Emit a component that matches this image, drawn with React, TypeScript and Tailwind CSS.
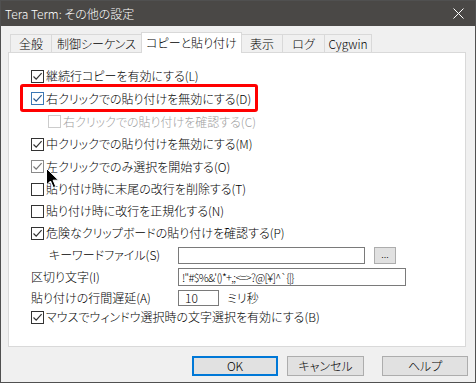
import React from 'react';

type BoxState = 'normal' | 'focus' | 'hover' | 'disabled';

function CheckBox({ checked, state = 'normal' }: { checked: boolean; state?: BoxState }) {
  const border =
    state === 'focus' ? 'border-[#3b78b5]' :
    state === 'hover' ? 'border-[#8a8a8a]' :
    state === 'disabled' ? 'border-[#cccccc]' : 'border-[#333333]';
  const stroke =
    state === 'focus' ? '#2b5b8f' :
    state === 'hover' ? '#777777' :
    state === 'disabled' ? '#bbbbbb' : '#333333';
  return (
    <span className={`w-[13px] h-[13px] border ${border} bg-white flex items-center justify-center shrink-0`}>
      {checked && (
        <svg width="11" height="11" viewBox="0 0 11 11">
          <path d="M1.5 5.5 L4.2 8.2 L9.6 2.2" fill="none" stroke={stroke} strokeWidth="1.2" />
        </svg>
      )}
    </span>
  );
}

function CheckRow({ label, checked, state, h, indent = false }: { label: string; checked: boolean; state?: BoxState; h: string; indent?: boolean }) {
  return (
    <div className={`flex items-center ${h} ${indent ? 'pl-[17px]' : ''}`}>
      <CheckBox checked={checked} state={state} />
      <span className={`ml-[2px] ${state === 'disabled' ? 'text-[#a0a0a0]' : 'text-black'}`}>{label}</span>
    </div>
  );
}

const tabs = [
  { label: '全般', w: 'w-[42px]' },
  { label: '制御シーケンス', w: 'w-[91px]' },
  { label: 'コピーと貼り付け', w: 'w-[101px]', active: true },
  { label: '表示', w: 'w-[42px]' },
  { label: 'ログ', w: 'w-[43px]' },
  { label: 'Cygwin', w: 'w-[48px]' },
];

export default function App() {
  return (
    <div
      className="relative w-[476px] h-[383px] bg-[#f0f0f0] border border-[#505050] flex flex-col text-[12px] font-light leading-none text-black [font-feature-settings:'palt'] overflow-hidden"
      style={{ fontFamily: '"Noto Sans CJK JP", "Noto Sans", sans-serif' }}
    >
      {/* title bar */}
      <div className="h-[25px] bg-[#4a4846] flex items-center justify-between shrink-0">
        <span className="pl-[4px] text-white text-[12px]">Tera Term: その他の設定</span>
        <svg width="11" height="11" viewBox="0 0 11 11" className="mr-[11px]">
          <path d="M0.5 0.5 L10.5 10.5 M10.5 0.5 L0.5 10.5" stroke="#ffffff" strokeWidth="1" />
        </svg>
      </div>

      <div className="pl-[7px] pr-[9px] pt-[6px]">
        {/* tabs */}
        <div className="flex items-end h-[20px] pl-[2px]">
          {tabs.map((t, i) =>
            t.active ? (
              <div
                key={t.label}
                className={`${t.w} h-[21px] -mb-px -ml-px relative z-10 bg-white border border-b-0 border-[#d9d9d9] flex items-center justify-center`}
              >
                {t.label}
              </div>
            ) : (
              <div
                key={t.label}
                className={`${t.w} h-[18px] ${i > 0 ? '-ml-px' : ''} bg-[#f0f0f0] border border-b-0 border-[#d9d9d9] flex items-center justify-center`}
              >
                {t.label}
              </div>
            )
          )}
        </div>

        {/* panel */}
        <div className="relative h-[295px] bg-white border border-[#d9d9d9] pl-[22px] pt-[12px]">
          <CheckRow h="h-[22px]" checked label="継続行コピーを有効にする(L)" />
          <CheckRow h="h-[23px]" checked state="focus" label="右クリックでの貼り付けを無効にする(D)" />
          <CheckRow h="h-[23px]" checked={false} state="disabled" indent label="右クリックでの貼り付けを確認する(C)" />
          <CheckRow h="h-[22px]" checked label="中クリックでの貼り付けを無効にする(M)" />
          <CheckRow h="h-[23px]" checked state="hover" label="左クリックでのみ選択を開始する(O)" />
          <CheckRow h="h-[22px]" checked={false} label="貼り付け時に末尾の改行を削除する(T)" />
          <CheckRow h="h-[22px]" checked={false} label="貼り付け時に改行を正規化する(N)" />
          <CheckRow h="h-[22px]" checked label="危険なクリップボードの貼り付けを確認する(P)" />

          <div className="flex items-center h-[22px]">
            <span className="w-[147px] pl-[18px]">キーワードファイル(S)</span>
            <div className="w-[187px] h-[17px] border border-[#7a7a7a] bg-white" />
            <div className="ml-[9px] w-[22px] h-[17px] border border-[#adadad] bg-[#e1e1e1] flex items-center justify-center text-[10px] pb-[3px]">
              ...
            </div>
          </div>

          <div className="flex items-center h-[22px]">
            <span className="w-[147px]">区切り文字(I)</span>
            <div className="w-[228px] h-[18px] border border-[#7a7a7a] bg-white flex items-center pl-[3px] text-[11px] tracking-[-0.7px] whitespace-nowrap overflow-hidden">
              {'!"#$%&\'()*+,;<=>?@[¥]^`{|}'}
            </div>
          </div>

          <div className="flex items-center h-[20px]">
            <span className="w-[147px]">貼り付けの行間遅延(A)</span>
            <div className="w-[41px] h-[16px] border border-[#7a7a7a] bg-white flex items-center pl-[6px]">10</div>
            <span className="ml-[8px]">ミリ秒</span>
          </div>

          <CheckRow h="h-[18px]" checked label="マウスでウィンドウ選択時の文字選択を有効にする(B)" />

          {/* highlight annotation */}
          <div className="absolute left-[11px] top-[31px] w-[238px] h-[28px] border-[3px] border-[#ff0000] rounded-[3px] pointer-events-none" />

          {/* mouse cursor */}
          <svg className="absolute left-[37px] top-[115px]" width="14" height="21" viewBox="0 0 14 21">
            <path d="M0.5 0.5 L0.5 17 L4.5 13 L7.3 19.6 L9.8 18.6 L7.1 12.2 L12.5 12.2 Z" fill="#000000" stroke="#ffffff" strokeWidth="1" />
          </svg>
        </div>
      </div>

      {/* buttons */}
      <div className="flex justify-end mt-[9px] pr-[7px]">
        <div className="w-[86px] h-[20px] border-2 border-[#0078d7] bg-[#e1e1e1] flex items-center justify-center">OK</div>
        <div className="ml-[9px] w-[77px] h-[20px] border border-[#adadad] bg-[#e1e1e1] flex items-center justify-center">キャンセル</div>
        <div className="ml-[18px] w-[86px] h-[20px] border border-[#adadad] bg-[#e1e1e1] flex items-center justify-center">ヘルプ</div>
      </div>
    </div>
  );
}
